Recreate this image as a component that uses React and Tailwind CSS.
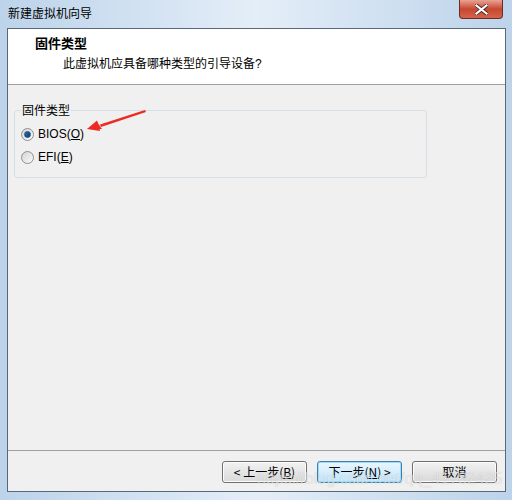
import React from 'react';

const cjk = { fontFamily: '"Noto Sans CJK SC", "Microsoft YaHei", sans-serif' };
const latin = { fontFamily: 'Tahoma, "Liberation Sans", "Noto Sans CJK SC", sans-serif' };

function Radio({ checked }) {
  return (
    <span className="relative w-[13px] h-[13px] rounded-full border border-[#8e8f8f] bg-gradient-to-br from-[#d4d4d4] to-[#fbfbfb] flex items-center justify-center shrink-0">
      {checked && <span className="w-[7px] h-[7px] rounded-full bg-gradient-to-br from-[#2a6fb0] to-[#0a3c6e] border border-[#1e4f80]" />}
    </span>
  );
}

function Button({ children, focused }) {
  return (
    <button
      className={`w-[85px] h-[22px] rounded-[3px] border text-[12px] text-black flex items-center justify-center ${
        focused
          ? 'border-[#3c7fb1] bg-gradient-to-b from-[#eaf6fd] to-[#bee6fd] shadow-[inset_0_0_0_1px_#9fdcfa]'
          : 'border-[#707070] bg-gradient-to-b from-[#f2f2f2] to-[#d9d9d9] shadow-[inset_0_0_0_1px_#fcfcfc]'
      }`}
      style={cjk}
    >
      {children}
    </button>
  );
}

export default function App() {
  return (
    <div className="w-[512px] h-[500px] relative overflow-hidden bg-gradient-to-r from-[#bcd3ea] via-[#e4eef8] to-[#bcd3ea] flex flex-col">
      {/* title bar */}
      <div className="h-[28px] flex items-start relative">
        <span className="text-[12px] text-black pl-[8px] pt-[4px]" style={cjk}>新建虚拟机向导</span>
        <div className="absolute right-[9px] top-0 w-[44px] h-[19px] rounded-b-[4px] border border-t-0 border-[#6e2a24] bg-gradient-to-b from-[#e8a293] via-[#c7462f] to-[#d6634a] flex items-center justify-center">
          <svg width="13" height="11" viewBox="0 0 13 11">
            <path d="M1.5 1.5 L11.5 9.5 M11.5 1.5 L1.5 9.5" stroke="#3b1f1a" strokeWidth="3.6" strokeLinecap="square" />
            <path d="M1.5 1.5 L11.5 9.5 M11.5 1.5 L1.5 9.5" stroke="#ffffff" strokeWidth="2.2" strokeLinecap="square" />
          </svg>
        </div>
      </div>

      {/* client area */}
      <div className="ml-[7px] mr-[6px] h-[464px] border border-[#5a6777] bg-[#f0f0f0] flex flex-col">
        <div className="h-[56px] bg-white border-b border-[#a0a0a0] pl-[27px] pt-[4px]" style={cjk}>
          <div className="text-[13px] font-bold text-black leading-[20px]">固件类型</div>
          <div className="text-[12px] text-black leading-[18px] pl-[28px] mt-[1px]">
            此虚拟机应具备哪种类型的引导设备<span style={latin}>?</span>
          </div>
        </div>

        <div className="flex-1 relative px-[6px] pt-[18px]">
          <fieldset className="w-[413px] h-[75px] border border-[#d5dfe5] rounded-[3px] pl-[6px]">
            <legend className="text-[12px] text-black px-[1px] leading-[14px]" style={cjk}>固件类型</legend>
            <div className="flex items-center gap-[4px] h-[14px] mt-[10px] text-[12px] text-black" style={latin}>
              <Radio checked />
              <span>BIOS(<u>O</u>)</span>
            </div>
            <div className="flex items-center gap-[4px] h-[14px] mt-[9px] text-[12px] text-black" style={latin}>
              <Radio />
              <span>EFI(<u>E</u>)</span>
            </div>
          </fieldset>

          <svg className="absolute left-[76px] top-[20px]" width="66" height="30" viewBox="0 0 66 30">
            <path d="M61 5 L62 7 L17 22 L16 19.5 Z" fill="#ee2a24" />
            <path d="M3 24 L13 15.5 L14.5 19 L18 24 Z" fill="#ee2a24" />
            <path d="M3 24 L16 26 L15 21 Z" fill="#ee2a24" />
          </svg>
        </div>

        <div className="h-[41px] border-t border-[#a0a0a0] relative flex items-start justify-end gap-[10px] pr-[8px] pt-[10px]">
          <Button>&lt; 上一步(<u>B</u>)</Button>
          <Button focused>下一步(<u>N</u>) &gt;</Button>
          <Button>取消</Button>
          <span className="absolute left-[249px] top-[19px] text-[16px] leading-[18px] text-white/60 pointer-events-none whitespace-nowrap" style={{ fontFamily: '"Liberation Sans", sans-serif', textShadow: '0 0 1px rgba(0,0,0,0.2)' }}>
            https://blog.csdn.net/qq_41782425
          </span>
        </div>
      </div>
    </div>
  );
}
